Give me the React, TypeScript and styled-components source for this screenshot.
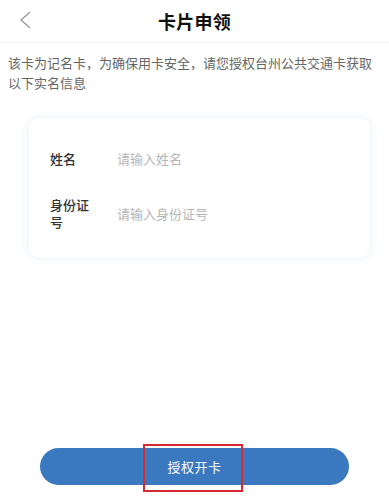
import React from 'react';
import styled, { createGlobalStyle } from 'styled-components';

const GlobalStyle = createGlobalStyle`
  html {
    -webkit-text-size-adjust: 100%;
    text-size-adjust: 100%;
  }
  html, body {
    margin: 0;
    padding: 0;
    background: #ffffff;
    font-family: 'Noto Sans CJK SC', 'Noto Sans', sans-serif;
  }
  * {
    box-sizing: border-box;
  }
`;

const App = () => {
  return (
    <Page>
      <GlobalStyle />
      <NavBar>
        <BackButton aria-label="返回">
          <svg width="12" height="18" viewBox="0 0 12 18">
            <polyline
              points="10.5,1.5 2,9 10.5,16.5"
              fill="none"
              stroke="#9a9a9a"
              strokeWidth="1.4"
              strokeLinecap="round"
              strokeLinejoin="round"
            />
          </svg>
        </BackButton>
        <Title>卡片申领</Title>
      </NavBar>

      <Notice>
        该卡为记名卡，为确保用卡安全，请您授权台州公共交通卡获取以下实名信息
      </Notice>

      <FormCard>
        <FieldRow>
          <Label>姓名</Label>
          <Input placeholder="请输入姓名" />
        </FieldRow>
        <FieldRow>
          <Label>身份证号</Label>
          <Input placeholder="请输入身份证号" />
        </FieldRow>
      </FormCard>

      <Footer>
        <SubmitWrap>
          <SubmitButton>授权开卡</SubmitButton>
          <Highlight />
        </SubmitWrap>
      </Footer>
    </Page>
  );
};

const Page = styled.div`
  display: flex;
  flex-direction: column;
  min-height: 100vh;
  background: #ffffff;
`;

const NavBar = styled.div`
  position: relative;
  display: flex;
  align-items: center;
  justify-content: center;
  height: 43px;
  border-bottom: 1px solid #f3f3f3;
`;

const BackButton = styled.button`
  position: absolute;
  left: 19px;
  top: 11px;
  display: flex;
  padding: 0;
  border: none;
  background: none;
`;

const Title = styled.h1`
  margin: 0;
  font-size: 18px;
  font-weight: 700;
  color: #111111;
  letter-spacing: 0.3px;
`;

const Notice = styled.p`
  margin: 10px 0 0;
  padding: 0 8px;
  font-size: 13px;
  line-height: 20px;
  color: #666666;
`;

const FormCard = styled.div`
  display: flex;
  flex-direction: column;
  gap: 5px;
  margin: 25px 19px 0 29px;
  padding: 20px 21px 16px;
  background: #ffffff;
  border-radius: 10px;
  box-shadow: 0 0 10px rgba(190, 205, 230, 0.35);
`;

const FieldRow = styled.div`
  display: flex;
  align-items: center;
  padding: 12px 0;
`;

const Label = styled.span`
  flex: 0 0 44px;
  width: 44px;
  font-size: 13px;
  line-height: 17px;
  color: #333333;
  font-weight: 500;
`;

const Input = styled.input`
  flex: 1;
  margin-left: 23px;
  padding: 0;
  border: none;
  outline: none;
  background: transparent;
  font-family: inherit;
  font-size: 13px;
  line-height: 17px;
  color: #333333;

  &::placeholder {
    color: #b5b5b5;
  }
`;

const Footer = styled.div`
  display: flex;
  justify-content: center;
  margin-top: auto;
  padding: 0 40px 15px;
`;

const SubmitWrap = styled.div`
  position: relative;
  width: 100%;
`;

const SubmitButton = styled.button`
  display: flex;
  align-items: center;
  justify-content: center;
  width: 100%;
  height: 37px;
  border: none;
  border-radius: 19px;
  background: #3a78c0;
  color: #ffffff;
  font-family: inherit;
  font-size: 13px;
  letter-spacing: 0.5px;
`;

const Highlight = styled.div`
  position: absolute;
  left: 103px;
  top: -4px;
  width: 100px;
  height: 48px;
  border: 2px solid #d42a30;
  pointer-events: none;
`;

export default App;
